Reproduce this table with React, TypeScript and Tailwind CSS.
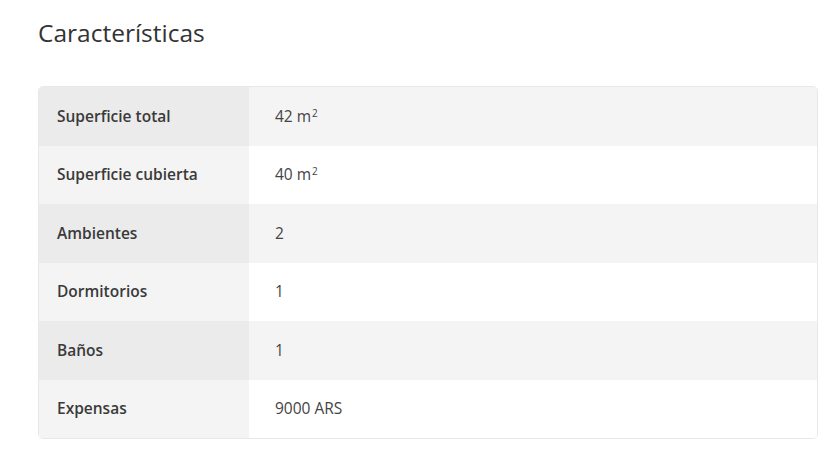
import React from "react";

interface Feature {
  label: string;
  value: React.ReactNode;
}

const Sq = () => <sup className="text-[10px] relative -top-[5px] ml-px">2</sup>;

const features: Feature[] = [
  { label: "Superficie total", value: <>42 m<Sq /></> },
  { label: "Superficie cubierta", value: <>40 m<Sq /></> },
  { label: "Ambientes", value: "2" },
  { label: "Dormitorios", value: "1" },
  { label: "Baños", value: "1" },
  { label: "Expensas", value: "9000 ARS" },
];

const App = () => {
  return (
    <div className="w-[833px] h-[450px] bg-white font-['Open_Sans',sans-serif] text-[#333]">
      <div className="pl-[38px] pr-[15px]">
        <h2 className="pt-[17px] text-[24.5px] leading-[32px] font-normal text-[#333]">
          Características
        </h2>
        <div className="mt-[37px] rounded-[5px] border border-[#e8e8e8] overflow-hidden">
          {features.map((f, i) => (
            <div
              key={f.label}
              className={
                "flex h-[58.5px] items-center " +
                (i % 2 === 0 ? "bg-[#f4f4f4]" : "bg-white")
              }
            >
              <div
                className={
                  "w-[210px] h-full flex items-center pl-[18px] text-[15.5px] font-semibold text-[#3a3a3a] " +
                  (i % 2 === 0 ? "bg-[#ebebeb]" : "bg-[#f4f4f4]")
                }
              >
                {f.label}
              </div>
              <div className="pl-[26px] text-[15.5px] text-[#444]">{f.value}</div>
            </div>
          ))}
        </div>
      </div>
    </div>
  );
};

export default App;
